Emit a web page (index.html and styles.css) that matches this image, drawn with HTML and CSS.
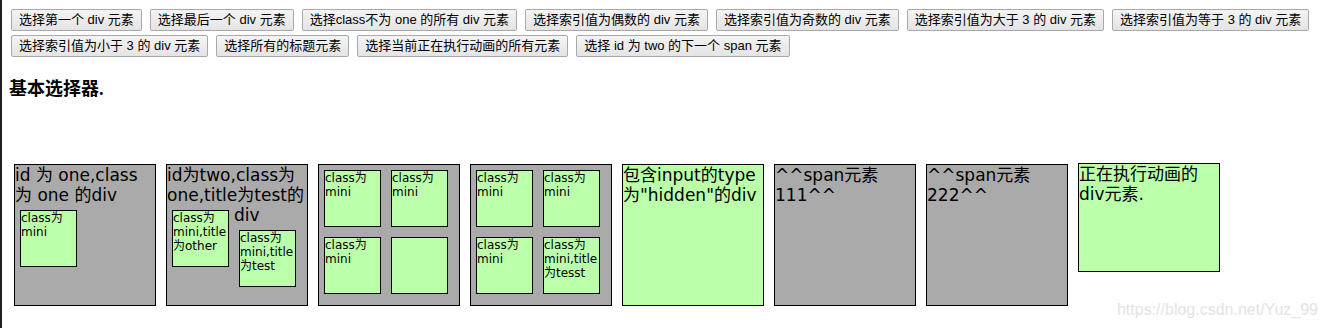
FILE: index.html
```html
<!DOCTYPE html>
<html lang="zh-CN">
<head>
    <meta charset="UTF-8">
    <meta name="viewport" content="width=device-width, initial-scale=1.0">
    <title>基本选择器</title>
    <link rel="stylesheet" href="styles.css">
</head>
<body>

    <div class="buttons">
        <button>选择第一个 div 元素</button>
        <button>选择最后一个 div 元素</button>
        <button>选择class不为 one 的所有 div 元素</button>
        <button>选择索引值为偶数的 div 元素</button>
        <button>选择索引值为奇数的 div 元素</button>
        <button>选择索引值为大于 3 的 div 元素</button>
        <button>选择索引值为等于 3 的 div 元素</button>
        <button>选择索引值为小于 3 的 div 元素</button>
        <button>选择所有的标题元素</button>
        <button>选择当前正在执行动画的所有元素</button>
        <button>选择 id 为 two 的下一个 span 元素</button>
    </div>

    <h3>基本选择器.</h3>

    <div class="stage">
        <div class="box" id="one">
            id 为 one,class 为 one 的div
            <div class="mini">class为mini</div>
        </div>

        <div class="box" id="two" title="test">
            id为two,class为one,title为test的div
            <div class="mini" title="other">class为mini,title为other</div>
            <div class="mini" title="test">class为mini,title为test</div>
        </div>

        <div class="box">
            <div class="mini">class为mini</div>
            <div class="mini">class为mini</div>
            <div class="mini">class为mini</div>
            <div class="mini"></div>
        </div>

        <div class="box">
            <div class="mini">class为mini</div>
            <div class="mini">class为mini</div>
            <div class="mini">class为mini</div>
            <div class="mini" title="tesst">class为mini,title为tesst</div>
        </div>

        <div class="box selected">包含input的type为"hidden"的div<input type="hidden" size="8"></div>

        <span class="box spanone">^^span元素 111^^</span>
        <span class="box spanone">^^span元素 222^^</span>

        <div class="box selected animating" id="mover">正在执行动画的div元素.</div>
    </div>

    <div class="watermark">https://blog.csdn.net/Yuz_99</div>

</body>
</html>
```

FILE: styles.css
```css
html { margin: 0; }
body {
    margin: 0;
    padding: 7px 8px 8px 7px;
    border-left: 2px solid #1e1e1e;
    min-height: 100vh;
    box-sizing: border-box;
    position: relative;
    background: #fff;
    color: #000;
    font-family: "Liberation Sans", "Noto Sans CJK SC", sans-serif;
}

/* button rows */
.buttons { display: flex; flex-wrap: wrap; column-gap: 4px; }
.buttons button {
    margin: 2px;
    padding: 1px 7px;
    height: 22px;
    font-family: "Liberation Sans", "Noto Sans CJK SC", sans-serif;
    font-size: 13px;
    line-height: 18px;
    color: #000;
    background: linear-gradient(#f4f4f4, #e4e4e4);
    border: 1px solid #a9a9a9;
    border-radius: 2px;
}

h3 {
    margin: 19px 0 59px 0;
    font-family: "Liberation Serif", "Noto Sans CJK SC", serif;
    font-size: 18px;
    line-height: 22px;
    font-weight: bold;
}

/* demo boxes */
.stage { display: flex; align-items: flex-start; }
.box {
    display: block;
    flex: none;
    width: 140px;
    height: 140px;
    margin: 5px;
    background-color: #aaa;
    border: 1px solid #000;
    font-family: "DejaVu Sans", Verdana, "Noto Sans CJK SC", sans-serif;
    font-size: 17px;
    line-height: 20px;
}
.box .mini {
    float: left;
    width: 55px;
    height: 55px;
    margin: 5px;
    background-color: #bbffaa;
    border: 1px solid #000;
    font-size: 12px;
    line-height: 14px;
}
.box.selected { background-color: #bbffaa; }
.box.animating { margin-top: 4px; height: 107px; overflow: hidden; }

.watermark {
    position: absolute;
    right: 10px;
    bottom: 9px;
    font-family: "Liberation Sans", sans-serif;
    font-size: 16px;
    line-height: 18px;
    color: #e4e4e4;
}
```
